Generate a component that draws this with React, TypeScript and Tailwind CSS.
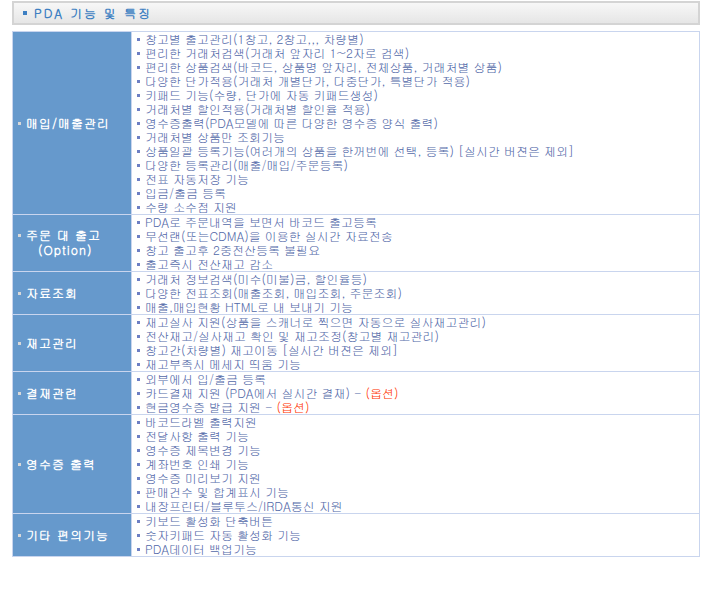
type Item = { text: string; option?: boolean };
type Group = { label: string; sub?: string; items: Item[] };

const GROUPS: Group[] = [
  {
    label: '매입/매출관리',
    items: [
      { text: '창고별 출고관리(1창고, 2창고,,, 차량별)' },
      { text: '편리한 거래처검색(거래처 앞자리 1~2자로 검색)' },
      { text: '편리한 상품검색(바코드, 상품명 앞자리, 전체상품, 거래처별 상품)' },
      { text: '다양한 단가적용(거래처 개별단가, 다중단가, 특별단가 적용)' },
      { text: '키패드 기능(수량, 단가에 자동 키패드생성)' },
      { text: '거래처별 할인적용(거래처별 할인율 적용)' },
      { text: '영수증출력(PDA모델에 따른 다양한 영수증 양식 출력)' },
      { text: '거래처별 상품만 조회기능' },
      { text: '상품일괄 등록기능(여러개의 상품을 한꺼번에 선택, 등록) [실시간 버젼은 제외]' },
      { text: '다양한 등록관리(매출/매입/주문등록)' },
      { text: '전표 자동저장 기능' },
      { text: '입금/출금 등록' },
      { text: '수량 소수점 지원' },
    ],
  },
  {
    label: '주문 대 출고',
    sub: '(Option)',
    items: [
      { text: 'PDA로 주문내역을 보면서 바코드 출고등록' },
      { text: '무선랜(또는CDMA)을 이용한 실시간 자료전송' },
      { text: '창고 출고후 2중전산등록 불필요' },
      { text: '출고즉시 전산재고 감소' },
    ],
  },
  {
    label: '자료조회',
    items: [
      { text: '거래처 정보검색(미수(미불)금, 할인율등)' },
      { text: '다양한 전표조회(매출조회, 매입조회, 주문조회)' },
      { text: '매출,매입현황 HTML로 내 보내기 기능' },
    ],
  },
  {
    label: '재고관리',
    items: [
      { text: '재고실사 지원(상품을 스캐너로 찍으면 자동으로 실사재고관리)' },
      { text: '전산재고/실사재고 확인 및 재고조정(창고별 재고관리)' },
      { text: '창고간(차량별) 재고이동 [실시간 버젼은 제외]' },
      { text: '재고부족시 메세지 띄움 기능' },
    ],
  },
  {
    label: '결재관련',
    items: [
      { text: '외부에서 입/출금 등록' },
      { text: '카드결재 지원 (PDA에서 실시간 결재) - ', option: true },
      { text: '현금영수증 발급 지원 - ', option: true },
    ],
  },
  {
    label: '영수증 출력',
    items: [
      { text: '바코드라벨 출력지원' },
      { text: '전달사항 출력 기능' },
      { text: '영수증 제목변경 기능' },
      { text: '계좌번호 인쇄 기능' },
      { text: '영수증 미리보기 지원' },
      { text: '판매건수 및 합계표시 기능' },
      { text: '내장프린터/블루투스/IRDA통신 지원' },
    ],
  },
  {
    label: '기타 편의기능',
    items: [
      { text: '키보드 활성화 단축버튼' },
      { text: '숫자키패드 자동 활성화 기능' },
      { text: 'PDA데이터 백업기능' },
    ],
  },
];

const FONT = "font-['Gulim','Noto_Sans_CJK_KR','Noto_Sans',sans-serif]";

function GroupRow({ group, last }: { group: Group; last: boolean }) {
  return (
    <div className={`grid grid-cols-[119px_1fr] ${last ? '' : 'border-b border-[#c9d5ee]'}`}>
      <div className="bg-[#6699cc] border-r border-[#c9d5ee] flex flex-col justify-center pl-[5px]">
        <div className="flex items-center gap-[5px]">
          <span className="w-[3px] h-[3px] bg-[#d8d8d8] shrink-0" />
          <span className="text-white font-bold text-[12px] leading-[14px] tracking-[1px]">{group.label}</span>
        </div>
        {group.sub && (
          <span className="text-white font-bold text-[12px] leading-[16px] tracking-[1px] pl-[20px]">{group.sub}</span>
        )}
      </div>
      <ul className="flex flex-col pl-[5px]">
        {group.items.map((it) => (
          <li key={it.text} className="flex items-center h-[14px] text-[12px] leading-[14px] text-[#5268a8] whitespace-nowrap">
            <span className="w-[3px] h-[3px] bg-[#6d7fc4] mr-[5px] shrink-0" />
            <span>
              {it.text}
              {it.option && <span className="text-[#ff3300]">(옵션)</span>}
            </span>
          </li>
        ))}
      </ul>
    </div>
  );
}

export default function App() {
  return (
    <div className={`w-[710px] h-[591px] bg-white pt-[1px] px-[12px] ${FONT}`}>
      {/* Title bar */}
      <div className="w-[688px] h-[24px] border-2 border-[#d4d4d4] bg-gradient-to-b from-[#f7f7f7] to-[#e6e6e6] flex items-center pl-[9px]">
        <span className="w-[4px] h-[4px] bg-[#3d7fc2] mr-[7px]" />
        <span className="text-[12px] font-bold text-[#3d7fc2] tracking-[2px]">PDA 기능 및 특징</span>
      </div>

      {/* Feature table */}
      <div className="w-[688px] mt-[6px] border border-[#c9d5ee]">
        {GROUPS.map((g, i) => (
          <GroupRow key={g.label} group={g} last={i === GROUPS.length - 1} />
        ))}
      </div>
    </div>
  );
}
